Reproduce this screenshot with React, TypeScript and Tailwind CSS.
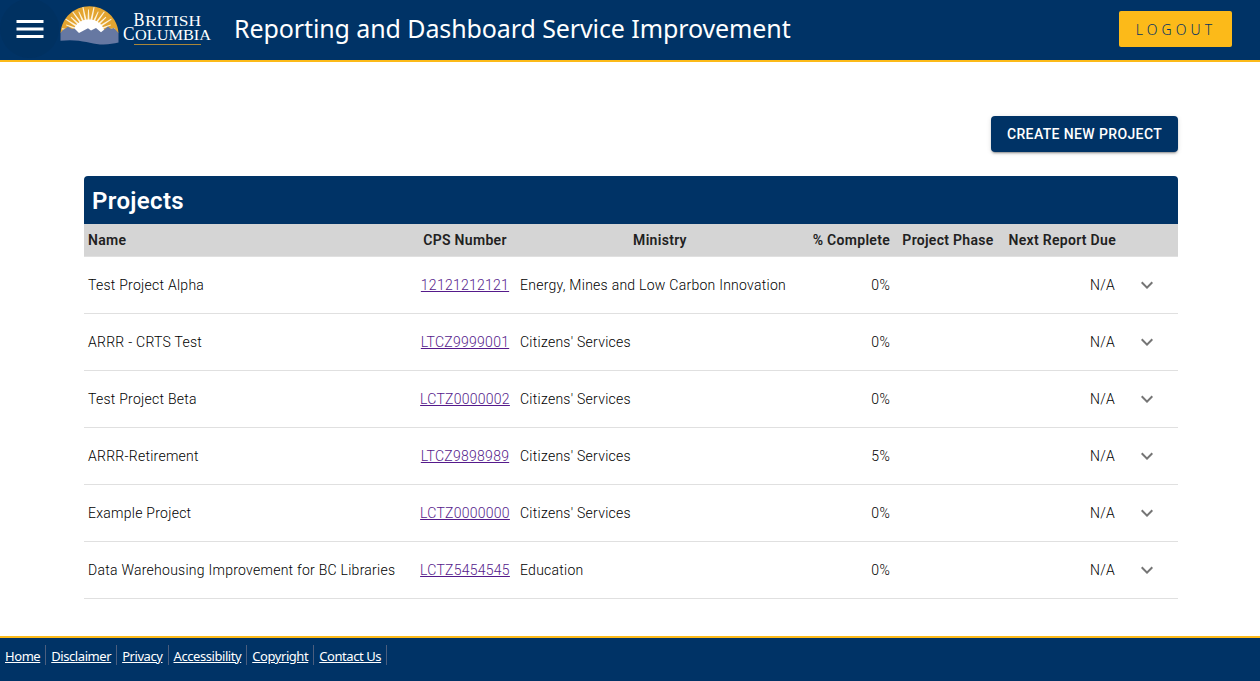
import React from "react";

const projects = [
  { name: "Test Project Alpha", cps: "12121212121", ministry: "Energy, Mines and Low Carbon Innovation", complete: "0%" },
  { name: "ARRR - CRTS Test", cps: "LTCZ9999001", ministry: "Citizens' Services", complete: "0%" },
  { name: "Test Project Beta", cps: "LCTZ0000002", ministry: "Citizens' Services", complete: "0%" },
  { name: "ARRR-Retirement", cps: "LTCZ9898989", ministry: "Citizens' Services", complete: "5%" },
  { name: "Example Project", cps: "LCTZ0000000", ministry: "Citizens' Services", complete: "0%" },
  { name: "Data Warehousing Improvement for BC Libraries", cps: "LCTZ5454545", ministry: "Education", complete: "0%" },
];

const footerLinks = ["Home", "Disclaimer", "Privacy", "Accessibility", "Copyright", "Contact Us"];

const columns = "grid grid-cols-[330px_102px_288px_89px_110px_116px_59px] items-center";

// Angles of the white sun rays in degrees, measured from the horizon centre.
const rays = [10, 21, 32, 43, 54, 66, 78, 90, 102, 114, 126, 137, 148, 159, 170];

function rayPath(deg: number, i: number) {
  const r = i % 2 === 0 ? 27 : 24;
  const at = (a: number, d: number) => {
    const t = (a * Math.PI) / 180;
    return `${(28.5 + Math.cos(t) * d).toFixed(2)} ${(29.5 - Math.sin(t) * d).toFixed(2)}`;
  };
  return `M${at(deg - 4.5, 13)}L${at(deg - 1, r)}L${at(deg + 1, r)}L${at(deg + 4.5, 13)}Z`;
}

function Logo() {
  return (
    <svg width="152" height="44" viewBox="0 0 152 44" className="block shrink-0" role="img" aria-label="British Columbia">
      <path d="M0.5 29C1.5 14 14 2.3 29.5 2.3S57.5 14 58.5 29Z" fill="#e3a430" />
      {rays.map((deg, i) => (
        <path key={deg} d={rayPath(deg, i)} fill="#fdf3dc" />
      ))}
      <path d="M13 29C14 20 21 15.5 29 15.5S43 20 45 29V33H13Z" fill="#fff" />
      <path
        d="M0.5 29L3 26L8 22.8L12 25L14.5 24.5L19 29L28 24.2L31 26.5L36 24L41 28.3L48 22.5L51 25L54 24L58.5 29V38.5C53 39.5 48 41 40 40.4C29 39.5 19 34.5 0.5 36.8Z"
        fill="#6678a2"
      />
      <g fill="#fff" fontFamily="'Liberation Serif', serif">
        <text x="73.5" y="22" fontSize="18" textLength="11" lengthAdjust="spacingAndGlyphs">B</text>
        <text x="85" y="22" fontSize="15" textLength="56" lengthAdjust="spacingAndGlyphs">RITISH</text>
        <text x="63" y="36.4" fontSize="18.5" textLength="11.5" lengthAdjust="spacingAndGlyphs">C</text>
        <text x="75" y="36.4" fontSize="15" textLength="76" lengthAdjust="spacingAndGlyphs">OLUMBIA</text>
      </g>
      <rect x="74" y="40" width="67" height="1" fill="#a98638" />
    </svg>
  );
}

export default function App() {
  return (
    <div className="flex h-[681px] w-[1260px] flex-col overflow-hidden bg-white font-['Roboto',sans-serif]">
      <header className="flex h-[62px] shrink-0 items-center border-b-2 border-[#fcba19] bg-[#003366]">
        <button aria-label="Menu" className="mb-[3px] flex size-[59px] shrink-0 items-center justify-center rounded-full bg-[#003161]">
          <svg width="36" height="36" viewBox="0 0 24 24" fill="#fff">
            <path d="M3 18h18v-2H3v2zm0-5h18v-2H3v2zm0-7v2h18V6H3z" />
          </svg>
        </button>
        <div className="mb-2 ml-px">
          <Logo />
        </div>
        <h1 className="mb-1 ml-[22px] font-['Noto_Sans',sans-serif] text-[25px] leading-[56px] tracking-[-0.1px] whitespace-nowrap text-white">
          Reporting and Dashboard Service Improvement
        </h1>
        <button className="mt-[-2px] mr-7 ml-auto flex h-9 w-[113px] items-center justify-center rounded-[2px] bg-[#fcba19] pl-px font-['Noto_Sans',sans-serif] text-[14px] font-light tracking-[4.1px] text-[#003366]">
          LOGOUT
        </button>
      </header>

      <main className="flex grow flex-col px-[84px] pt-[54px] pr-[82px]">
        <button className="flex h-9 w-[187px] items-center justify-center self-end rounded-[4px] bg-[#003366] text-[14px] font-medium tracking-[0.38px] text-white shadow-[0_3px_1px_-2px_rgba(0,0,0,0.2),0_2px_2px_0_rgba(0,0,0,0.14),0_1px_5px_0_rgba(0,0,0,0.12)]">
          CREATE NEW PROJECT
        </button>

        <section className="mt-6">
          <h2 className="flex h-12 items-center rounded-t-[4px] bg-[#003366] pt-[2px] pl-2 text-[24px] font-semibold tracking-[0.35px] text-white">
            Projects
          </h2>
          <div className={`${columns} h-[33px] border-b border-[#e0e0e0] bg-[#d5d5d5] text-[14px] font-semibold tracking-[0.3px] whitespace-nowrap text-[#212121]`}>
            <div className="px-1">Name</div>
            <div className="text-center">CPS Number</div>
            <div className="text-center">Ministry</div>
            <div className="pr-[3px] text-right">% Complete</div>
            <div className="text-center">Project Phase</div>
            <div className="pr-[3px] text-right">Next Report Due</div>
            <div />
          </div>
          {projects.map((p) => (
            <div key={p.cps} className={`${columns} h-[57px] border-b border-[#e0e0e0] text-[14px] font-light tracking-[0.26px] whitespace-nowrap text-[#000000]`}>
              <div className="px-1">{p.name}</div>
              <div className="text-center">
                <a className="text-[#551a8b] underline">{p.cps}</a>
              </div>
              <div className="pl-1">{p.ministry}</div>
              <div className="pr-[3px] text-right">{p.complete}</div>
              <div />
              <div className="pr-1 text-right">N/A</div>
              <div className="pl-4">
                <svg width="24" height="24" viewBox="0 0 24 24" fill="#757575">
                  <path d="M16.59 8.59L12 13.17 7.41 8.59 6 10l6 6 6-6z" />
                </svg>
              </div>
            </div>
          ))}
        </section>
      </main>

      <footer className="flex h-[45px] shrink-0 border-t-2 border-[#fcba19] bg-[#003366] pt-[7px]">
        {footerLinks.map((label) => (
          <div key={label} className="flex h-5 items-center border-r border-[#4b5e7e] px-[5px]">
            <a className="mt-[2px] font-['Noto_Sans',sans-serif] text-[13px] leading-5 tracking-[-0.43px] whitespace-nowrap text-white underline">{label}</a>
          </div>
        ))}
      </footer>
    </div>
  );
}
